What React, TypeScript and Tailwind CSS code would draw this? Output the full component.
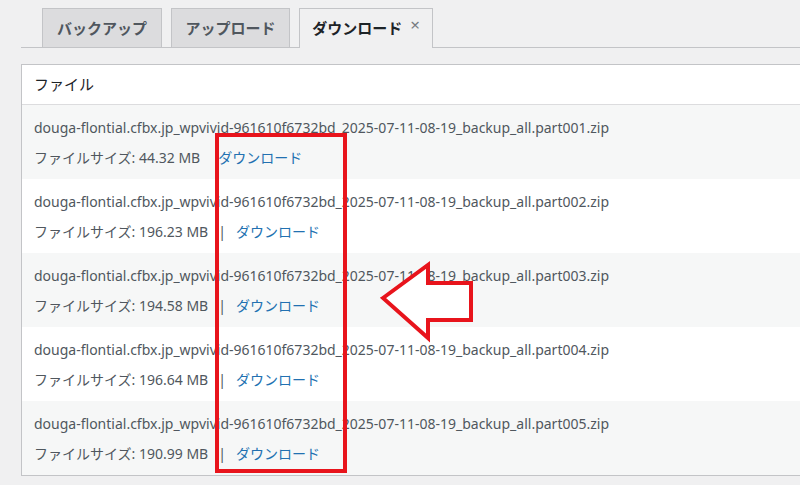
const rows = [
  { part: '001', size: '44.32 MB', sep: false },
  { part: '002', size: '196.23 MB', sep: true },
  { part: '003', size: '194.58 MB', sep: true },
  { part: '004', size: '196.64 MB', sep: true },
  { part: '005', size: '190.99 MB', sep: true },
]

export default function App() {
  return (
    <div
      className="relative h-[485px] w-[800px] overflow-hidden bg-[#f0f0f1] text-[#50575e]"
      style={{ fontFamily: '"Noto Sans", "Noto Sans CJK JP", sans-serif' }}
    >
      {/* Tabs */}
      <div className="ml-[21px] flex h-[48px] items-end gap-[9px] border-b border-[#c3c4c7] pl-[21px] pt-[8px]">
        <div className="flex h-[39px] w-[120px] items-center justify-center border border-b-0 border-[#c3c4c7] bg-[#dcdcde] text-[15px] font-bold text-[#50575e]">
          バックアップ
        </div>
        <div className="flex h-[39px] w-[119px] items-center justify-center border border-b-0 border-[#c3c4c7] bg-[#dcdcde] text-[15px] font-bold text-[#50575e]">
          アップロード
        </div>
        <div className="-mb-px flex h-[40px] w-[134px] items-center justify-center gap-2 border border-b-0 border-[#c3c4c7] bg-[#f0f0f1] text-[15px] font-bold text-[#1d2327]">
          ダウンロード
          <span className="-mt-2 text-[17px] font-normal text-[#787c82]">×</span>
        </div>
      </div>

      {/* Panel */}
      <div className="ml-[21px] mt-[16px] border border-r-0 border-[#c3c4c7] bg-white">
        <div className="flex h-[40px] items-center border-b border-[#dcdcde] px-[12px] text-[15px] text-[#1d2327]">
          ファイル
        </div>
        {rows.map((r, i) => (
          <div key={r.part} className={`h-[74px] px-[12px] pt-[13px] ${i % 2 === 0 ? 'bg-[#f6f7f7]' : 'bg-white'}`}>
            <div className="text-[14px] leading-[20px]">
              douga-flontial.cfbx.jp_wpvivid-961610f6732bd_2025-07-11-08-19_backup_all.part{r.part}.zip
            </div>
            <div className="mt-[10px] flex items-center text-[14px] leading-[20px]">
              <span>ファイルサイズ: {r.size}</span>
              {r.sep ? <span className="mx-[10px]">|</span> : <span className="w-[18px]" />}
              <span className="text-[#2271b1]">ダウンロード</span>
            </div>
          </div>
        ))}
      </div>

      {/* Highlight box */}
      <div className="absolute left-[215px] top-[133px] h-[340px] w-[132px] border-[4px] border-[#e8141c]" />

      {/* Arrow */}
      <svg className="absolute left-[378px] top-[260px]" width="100" height="84" viewBox="0 0 100 84">
        <polygon
          points="5,38 50,5 50,23 93,23 93,60 50,60 50,78"
          fill="white"
          stroke="#e8141c"
          strokeWidth="4"
          strokeLinejoin="miter"
        />
      </svg>
    </div>
  )
}
